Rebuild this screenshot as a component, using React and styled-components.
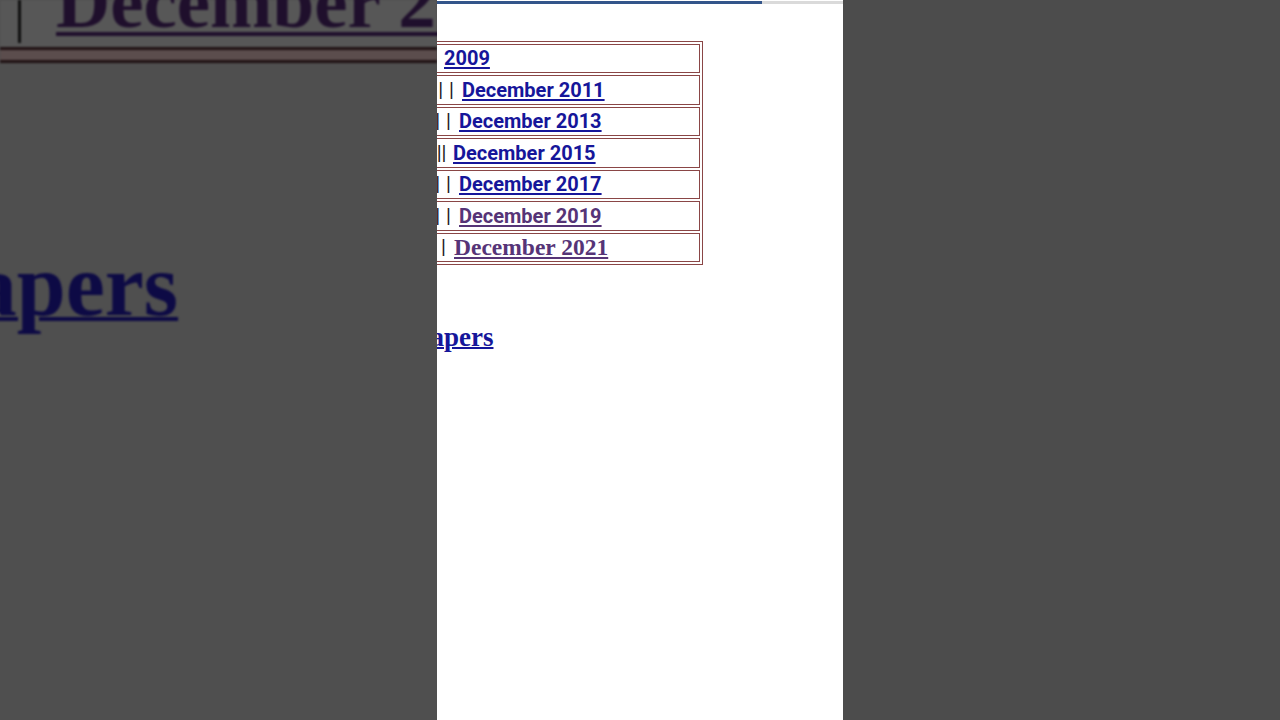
import React from "react";
import styled, { createGlobalStyle } from "styled-components";

const Global = createGlobalStyle`
  html, body { margin: 0; padding: 0; background: #4c4c4c; overflow: hidden; }
  body { width: 1280px; height: 720px; font-family: Roboto, "Liberation Sans", sans-serif; }
  #root { width: 1280px; height: 720px; }
`;

const Stage = styled.div`
  display: flex;
  width: 1280px;
  height: 720px;
  overflow: hidden;
`;

/* ---------- blurred side backdrop ---------- */
const Backdrop = styled.div`
  width: 437px;
  height: 720px;
  flex-shrink: 0;
  overflow: hidden;
  background: #4f4f4f;
`;

const BackdropInner = styled.div`
  display: flex;
  flex-direction: column;
  filter: blur(0.8px);
`;

const BgCell = styled.div`
  display: flex;
  align-items: flex-start;
  height: 47px;
  background: #575757;
`;

const BgBar = styled.div`
  width: 3px;
  height: 43px;
  margin-left: 18px;
  background: #0e0e0e;
  flex-shrink: 0;
`;

const BgHeading = styled.span`
  margin-left: 35px;
  margin-top: -36px;
  font-family: "Liberation Serif", serif;
  font-weight: 700;
  font-size: 75px;
  line-height: 1;
  white-space: nowrap;
  color: #1f0f2c;
  text-decoration: underline;
  text-decoration-thickness: 4px;
  text-underline-offset: 5px;
`;

const BgRule = styled.div`
  height: 3px;
  background: #1f1113;
`;

const BgRuleGap = styled.div`
  height: 10px;
  background: #5b4d4d;
`;

const BgLink = styled.span`
  display: block;
  margin-left: -81px;
  margin-top: 172px;
  font-family: "Liberation Serif", serif;
  font-weight: 700;
  font-size: 88px;
  white-space: nowrap;
  color: #0d0a45;
  text-decoration: underline;
  text-decoration-thickness: 4px;
`;

const Side = styled.div`
  width: 437px;
  height: 720px;
  flex-shrink: 0;
  background: #4c4c4c;
`;

/* ---------- phone screen ---------- */
const Phone = styled.div`
  width: 406px;
  height: 720px;
  flex-shrink: 0;
  background: #ffffff;
  overflow: hidden;
  display: flex;
  flex-direction: column;
`;

const Progress = styled.div`
  display: flex;
  height: 3px;
  margin-top: 1px;
  background: #dadada;
`;

const ProgressFill = styled.div`
  height: 100%;
  background: #33558a;
`;

const Table = styled.div`
  width: 270px;
  margin-left: -4px;
  margin-top: 36.5px;
  box-sizing: border-box;
  border: 1px solid #8a4646;
  padding: 2px;
  display: flex;
  flex-direction: column;
  gap: 2px;
`;

const Row = styled.div`
  height: 29.5px;
  box-sizing: border-box;
  border: 1px solid #8a4646;
  display: flex;
  align-items: center;
  white-space: nowrap;
`;

const Lead = styled.span`
  flex-shrink: 0;
  width: ${(p) => p.$w}px;
  padding-right: ${(p) => p.$gap}px;
  box-sizing: border-box;
  display: flex;
  justify-content: flex-end;
  font-family: Roboto, "Liberation Sans", sans-serif;
  font-size: 20px;
  font-weight: 400;
  color: #1a1a1a;
  word-spacing: 1px;
  white-space: pre;
`;

const Link = styled.a`
  font-family: ${(p) =>
    p.$serif ? '"Liberation Serif", serif' : 'Roboto, "Liberation Sans", sans-serif'};
  font-size: ${(p) => (p.$serif ? 23.5 : 20)}px;
  font-weight: 700;
  color: ${(p) => (p.$visited ? "#563477" : "#16169a")};
  text-decoration: underline;
  text-decoration-thickness: 2px;
  text-underline-offset: 2px;
  cursor: pointer;
`;

const PapersLink = styled.a`
  display: block;
  margin-left: -23px;
  margin-top: 57px;
  font-family: "Liberation Serif", serif;
  font-size: 27px;
  font-weight: 700;
  color: #16169a;
  text-decoration: underline;
  text-decoration-thickness: 2px;
  white-space: nowrap;
`;

const rows = [
  { lead: "", w: 7, gap: 0, text: "2009" },
  { lead: "| |", w: 25, gap: 8, text: "December 2011" },
  { lead: "| |", w: 22, gap: 8, text: "December 2013" },
  { lead: "||", w: 16, gap: 6.5, text: "December 2015" },
  { lead: "| |", w: 22, gap: 8, text: "December 2017" },
  { lead: "| |", w: 22, gap: 8, text: "December 2019", visited: true },
  { lead: "|", w: 17, gap: 8, text: "December 2021", visited: true, serif: true },
];

export default function App() {
  return (
    <>
      <Global />
      <Stage>
        <Backdrop>
          <BackdropInner>
            <BgCell>
              <BgBar />
              <BgHeading>December 2021</BgHeading>
            </BgCell>
            <BgRule />
            <BgRuleGap />
            <BgRule />
            <BgLink>Papers</BgLink>
          </BackdropInner>
        </Backdrop>

        <Phone>
          <Progress>
            <ProgressFill style={{ width: "325px" }} />
          </Progress>
          <Table>
            {rows.map((r) => (
              <Row key={r.text}>
                <Lead $w={r.w} $gap={r.gap}>{r.lead}</Lead>
                <Link $visited={r.visited} $serif={r.serif}>{r.text}</Link>
              </Row>
            ))}
          </Table>
          <PapersLink>Papers</PapersLink>
        </Phone>

        <Side />
      </Stage>
    </>
  );
}
